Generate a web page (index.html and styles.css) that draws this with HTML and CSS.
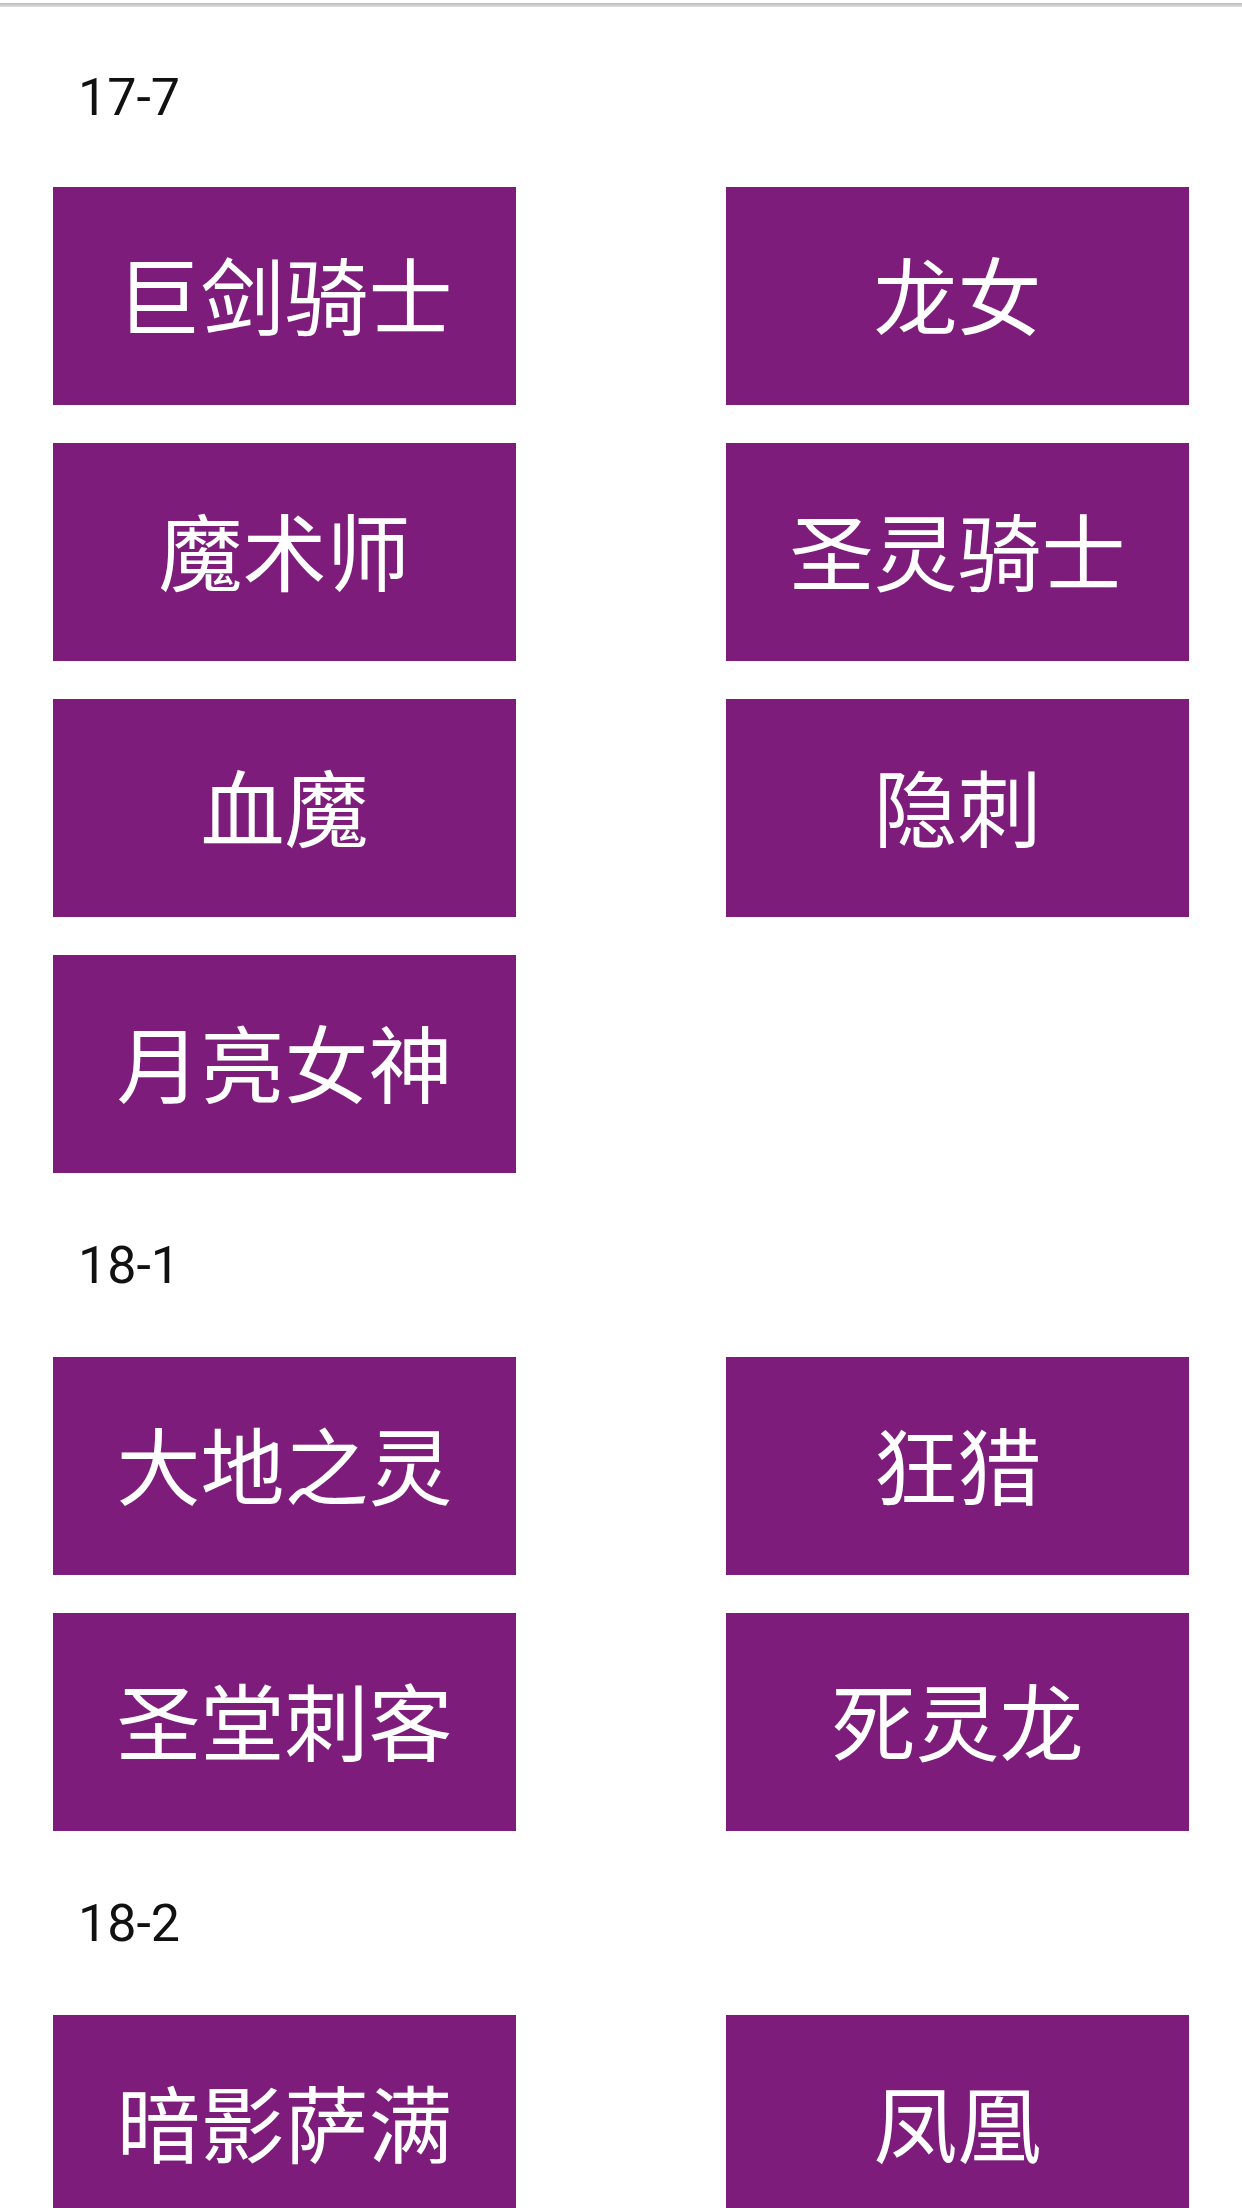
FILE: index.html
```html
<!DOCTYPE html>
<html lang="zh-CN">
<head>
<meta charset="utf-8">
<title>Heroes</title>
<link rel="stylesheet" href="styles.css">
</head>
<body>
<div class="topline"></div>
<main class="list">
  <section class="group">
    <div class="label first">17-7</div>
    <div class="grid">
      <div class="btn">巨剑骑士</div>
      <div class="btn">龙女</div>
      <div class="btn">魔术师</div>
      <div class="btn">圣灵骑士</div>
      <div class="btn">血魔</div>
      <div class="btn">隐刺</div>
      <div class="btn">月亮女神</div>
    </div>
  </section>
  <section class="group">
    <div class="label">18-1</div>
    <div class="grid">
      <div class="btn">大地之灵</div>
      <div class="btn">狂猎</div>
      <div class="btn">圣堂刺客</div>
      <div class="btn">死灵龙</div>
    </div>
  </section>
  <section class="group">
    <div class="label">18-2</div>
    <div class="grid">
      <div class="btn">暗影萨满</div>
      <div class="btn">凤凰</div>
    </div>
  </section>
</main>
</body>
</html>
```
FILE: styles.css
```css
html {
  overflow: hidden;
  background: #ffffff;
}
body {
  margin: 0;
  background: #ffffff;
  font-family: Roboto, "Noto Sans CJK SC", sans-serif;
}
.topline {
  margin-top: 3px;
  height: 4px;
  background: linear-gradient(#bcbcbc, #dedede);
}
.label {
  height: 184px;
  display: flex;
  align-items: center;
  padding-left: 78px;
  font-family: Roboto, sans-serif;
  font-size: 52px;
  color: #111111;
}
.label.first {
  height: 180px;
}
.grid {
  display: grid;
  grid-template-columns: 463px 463px;
  justify-content: space-between;
  row-gap: 38px;
  padding: 0 53px;
}
.btn {
  height: 218px;
  box-sizing: border-box;
  padding-bottom: 8px;
  background: #7e1c7b;
  color: #ffffff;
  display: flex;
  align-items: center;
  justify-content: center;
  font-family: "Noto Sans CJK SC", sans-serif;
  font-weight: 400;
  font-size: 84px;
}
```
